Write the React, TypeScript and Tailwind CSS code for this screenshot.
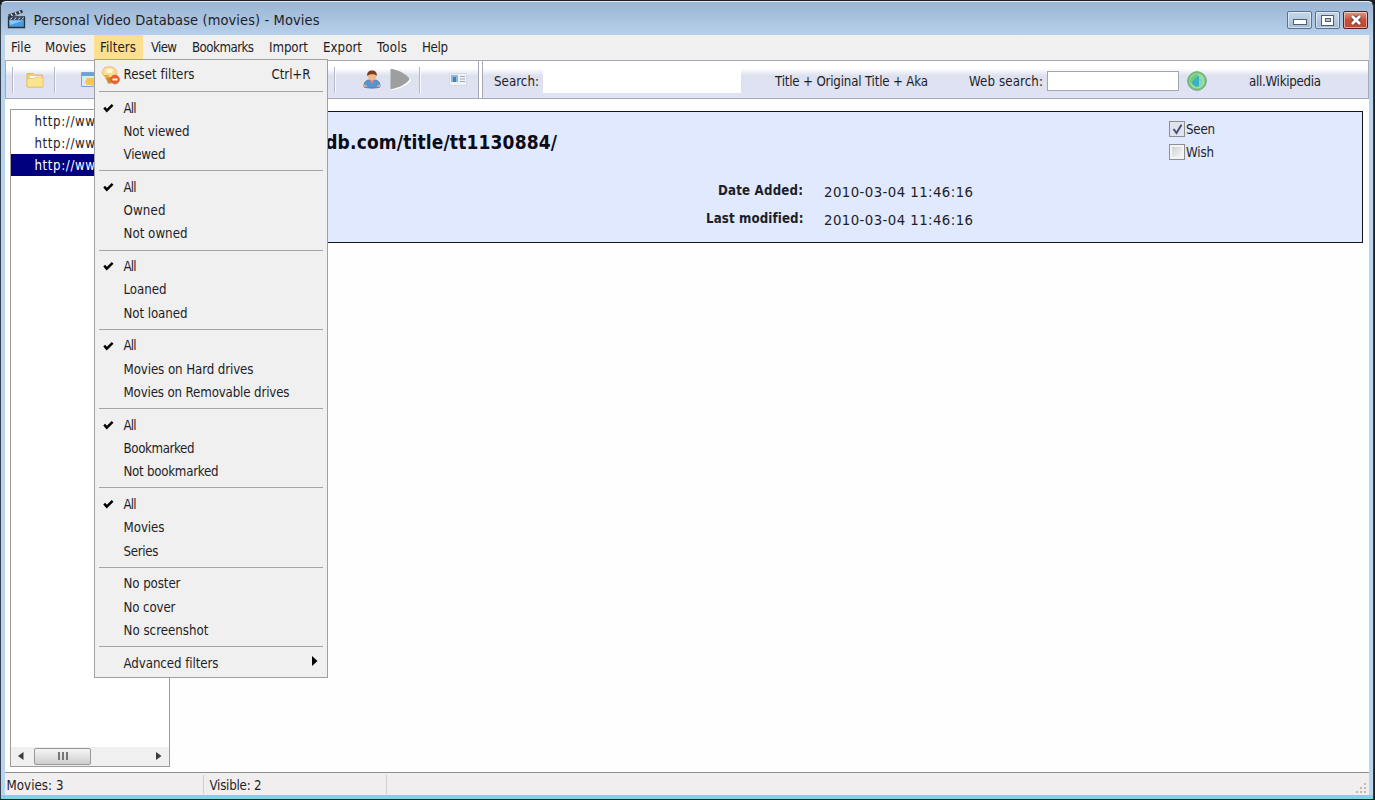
import React, { useLayoutEffect, useRef, useState } from 'react';

/* Text that spreads its letters evenly over the width of its box. */
function T({ c, children }: { c: string; children: string }) {
  const box = useRef<HTMLSpanElement>(null);
  const inner = useRef<HTMLSpanElement>(null);
  const [ls, setLs] = useState(0);
  useLayoutEffect(() => {
    if (box.current && inner.current && children.length > 1) {
      const w = box.current.getBoundingClientRect().width;
      const n = inner.current.getBoundingClientRect().width;
      setLs((w - n) / (children.length - 1));
    }
  }, [children]);
  return (
    <span ref={box} className={`block shrink-0 whitespace-nowrap ${c}`}>
      <span ref={inner} className="inline-block" style={{ letterSpacing: ls }}>{children}</span>
    </span>
  );
}

const groups: [string, string][][] = [
  [['All', 'w-[13px]'], ['Not viewed', 'w-[66px]'], ['Viewed', 'w-[42px]']],
  [['All', 'w-[13px]'], ['Owned', 'w-[42px]'], ['Not owned', 'w-[64px]']],
  [['All', 'w-[13px]'], ['Loaned', 'w-[43px]'], ['Not loaned', 'w-[64px]']],
  [['All', 'w-[13px]'], ['Movies on Hard drives', 'w-[130px]'], ['Movies on Removable drives', 'w-[166px]']],
  [['All', 'w-[13px]'], ['Bookmarked', 'w-[71px]'], ['Not bookmarked', 'w-[95px]']],
  [['All', 'w-[13px]'], ['Movies', 'w-[41px]'], ['Series', 'w-[35px]']],
  [['No poster', 'w-[57px]'], ['No cover', 'w-[52px]'], ['No screenshot', 'w-[85px]']],
];

const Sep = () => (
  <div className="flex h-[9.4px] items-center px-1"><div className="h-px w-full bg-[#a5a5a5]" /></div>
);

const Tick = () => (
  <svg className="h-[10px] w-[11px]" viewBox="0 0 11 10"><path d="M1.2 4.6 3.8 7.6 9.6 1.800" fill="none" stroke="#000" strokeWidth="2.500" /></svg>
);

function ResetIcon() {
  return (
    <svg className="h-[19px] w-[19px]" viewBox="0 0 19 19">
      <path d="M8 .8C3.500.8.8 3.500 1.300 7c.4 2.500 3 3.500 4 6.500h6c.5-3 4-3.500 4.300-7C15.800 3 12.500.8 8 .8Z" fill="#fbdc92" stroke="#e8b36a" strokeWidth=".8" />
      <path d="M5 3.500c2-1.500 5-1 7 0l-1 3.500H6Z" fill="#fff8de" />
      <path d="M4.500 11h7v2l-1 4.500H7Z" fill="#c98f2e" />
      <path d="M3 9h5l-1 3H5Z" fill="#f0a63c" />
      <circle cx="14" cy="13.500" r="4.400" fill="#e9622b" stroke="#d2602f" strokeWidth=".7" />
      <path d="M11.500 13.500h5" stroke="#fff" strokeWidth="1.900" />
    </svg>
  );
}

function Menu() {
  return (
    <div className="absolute left-[94px] top-[59px] z-10 flex h-[619px] w-[234px] flex-col border border-[#a0a0a0] bg-[#f0f0f0] pt-[3.500px] text-[#1e1e28]">
      <div className="flex h-[23.300px] items-center pl-[6px]">
        <ResetIcon />
        <T c="ml-[3.500px] w-[71px]">Reset filters</T>
        <T c="ml-[77px] w-[39px]">Ctrl+R</T>
      </div>
      {groups.map((g, i) => (
        <React.Fragment key={i}>
          <Sep />
          {g.map(([t, w]) => (
            <div key={t} className="flex h-[23.300px] items-center">
              <div className="w-[28.500px] shrink-0 pl-[8px]">{t === 'All' && <Tick />}</div>
              <div className="pt-[1.400px]"><T c={w}>{t}</T></div>
            </div>
          ))}
        </React.Fragment>
      ))}
      <Sep />
      <div className="flex h-[23.300px] items-center pl-[28.500px]">
        <div className="pt-[1.400px]"><T c="w-[95px]">Advanced filters</T></div>
        <svg className="-mt-[3px] ml-[93px] h-[10px] w-[6px]" viewBox="0 0 6 10"><path d="M0 0 5.500 5 0 10Z" fill="#000" /></svg>
      </div>
    </div>
  );
}

function Clapper() {
  return (
    <svg className="h-[20px] w-[20px]" viewBox="0 0 20 20">
      <path d="M1 5.500 15 .8l1 3L2.500 8.500Z" fill="#333b45" />
      <path d="m4 4.800 1.500 2.200M8 3.300 9.500 5.700M12 2l1.500 2.500" stroke="#dde5ee" strokeWidth="1.300" />
      <path d="M1.500 8h16v10.500h-16Z" fill="#4a9be0" stroke="#27323f" strokeWidth="1.300" />
      <path d="M2 8.500h15v2.300H2Z" fill="#38424e" />
      <path d="m5 8.500-1.500 2M9 8.500l-1.500 2M13 8.500l-1.500 2M16.500 8.500l-1.500 2" stroke="#e6edf5" />
      <path d="M2.500 11.500h14L3 16Z" fill="#8cc8f3" />
    </svg>
  );
}

function Folder() {
  return (
    <svg className="h-[16px] w-[18px]" viewBox="0 0 18 16">
      <path d="M1 1.500h6l1.500 1.500H16.500v12H1Z" fill="#f5cf66" stroke="#dfb766" />
      <path d="M4 4h11v3H4Z" fill="#fff" />
      <path d="M1 6.500h7l1.500-1.500h7.500v10H1Z" fill="#fbe48e" stroke="#e6c268" strokeWidth=".8" />
    </svg>
  );
}

const Divider = () => <div className="h-[26px] w-[2px] border-l border-[#b3b9c8] bg-white/80" />;

const capBtn = 'flex h-[18px] w-[25px] items-center justify-center rounded-[2px] border shadow-[inset_0_0_0_1px_rgba(255,255,255,0.5)]';

export default function App() {
  return (
    <div className="relative flex h-[800px] w-[1375px] flex-col overflow-hidden bg-[#1b1f24] font-['DejaVu_Sans_Condensed','DejaVu_Sans',sans-serif] text-[13.200px] leading-[18px] text-[#1e1e28]">
      <div className="mt-px flex h-[798px] w-[1374px] flex-col rounded-t-[6px] border-l border-r border-t border-l-[#35414f] border-r-[#12485a] border-t-[#e4edf6] bg-[#b9d5ee]">
        <div className="flex h-[33px] shrink-0 items-center rounded-t-[6px] bg-gradient-to-b from-[#9ab5d4] to-[#b7cfe9] pl-[6px]">
          <Clapper />
          <T c="ml-[6.500px] mt-[2px] w-[286px] text-[14.500px]">Personal Video Database (movies) - Movies</T>
          <div className="ml-auto mt-[3px] flex gap-[3px] pr-[5px]">
            <div className={`${capBtn} border-[#5c718e] bg-gradient-to-b from-[#c6d7ea] to-[#a3bbd6]`}>
              <div className="mt-[4px] h-[6px] w-[14px] border border-[#525d6e] bg-white" />
            </div>
            <div className={`${capBtn} border-[#5c718e] bg-gradient-to-b from-[#c6d7ea] to-[#a3bbd6]`}>
              <div className="flex h-[11px] w-[13px] items-center justify-center border border-[#525d6e] bg-white"><div className="h-[4px] w-[6px] border border-[#525d6e] bg-[#b4c6dc]" /></div>
            </div>
            <div className={`${capBtn} border-[#5b1f22] bg-gradient-to-b from-[#dc9a8c] via-[#c84c36] to-[#bf4a30]`}>
              <svg className="h-[12px] w-[14px]" viewBox="0 0 14 12"><path d="m3 2 8 8M11 2l-8 8" stroke="#5d3a3a" strokeWidth="4.500" /><path d="m3 2 8 8M11 2l-8 8" stroke="#fff" strokeWidth="2.800" /></svg>
            </div>
          </div>
        </div>

        <div className="mx-[4px] flex min-h-0 flex-1 flex-col bg-white">
          <div className="flex h-[25px] shrink-0 items-center bg-[#f0f0f0] pl-[6px]">
            <T c="w-[20px]">File</T>
            <T c="ml-[14px] w-[41px]">Movies</T>
            <div className="ml-[8px] flex h-full w-[49px] items-center bg-[#fddf8f] pl-[6px]"><T c="w-[36px]">Filters</T></div>
            <T c="ml-[8px] w-[26px]">View</T>
            <T c="ml-[15px] w-[62px]">Bookmarks</T>
            <T c="ml-[15px] w-[39px]">Import</T>
            <T c="ml-[15px] w-[39px]">Export</T>
            <T c="ml-[15px] w-[30px]">Tools</T>
            <T c="ml-[15px] w-[26px]">Help</T>
          </div>

          <div className="flex h-[39px] shrink-0 items-center border border-[#a6a9b5] bg-gradient-to-b from-white from-20% via-[#dde1ef] via-40% to-[#dfe3f5] pl-[6px]">
            <Divider />
            <div className="ml-[12px]"><Folder /></div>
            <div className="ml-[10px]"><Divider /></div>
            <svg className="ml-[25px] h-[18px] w-[18px]" viewBox="0 0 18 18"><path d="M.5 1.500h16v14H.5Z" fill="#d9e8fa" stroke="#7ba4d8" /><path d="M1 2h15v3H1Z" fill="#6d9fe0" /><path d="M6 7h10v7l-3 3-2-3H6l-2-3Z" fill="#f7c64b" /></svg>
            <div className="ml-[235px]"><Divider /></div>
            <svg className="ml-[27px] h-[19px] w-[18px]" viewBox="0 0 18 19">
              <path d="M1 17c-.5-4 2-7 5-7h6c3 0 5.500 3 5 7-4 1.500-12 1.500-16 0Z" fill="#5a94cf" stroke="#3f72ab" strokeWidth=".8" />
              <path d="M6.500 10h5L9 14Z" fill="#d98a80" />
              <path d="M1 14.500c2 0 3 1 3 2.500l-3-.3ZM17 14.500c-2 0-3 1-3 2.500l3-.3Z" fill="#e8b08a" />
              <circle cx="9" cy="6" r="4.300" fill="#f0b98c" />
              <path d="M4.300 6C3.500 2.500 6 .5 9 .5s5.500 2 4.700 5.500C12.500 3.500 6 3.500 4.300 6Z" fill="#7b3f1d" />
            </svg>
            <svg className="ml-[9px] h-[23px] w-[22px]" viewBox="0 0 22 23"><path d="M1.500 2C9 2 20.500 9 21 12c-.5 3-12 10-19.500 10Z" fill="#fff" /><path d="M.5 1C8 1 19 8 19.500 11c-.5 3-11.500 10-19 10Z" fill="#9d9f9e" /></svg>
            <div className="ml-[7px]"><Divider /></div>
            <svg className="ml-[28px] h-[13px] w-[18px]" viewBox="0 0 18 13"><path d="M.5.5h17v12H.5Z" fill="#edf1f8" stroke="#d3d9e4" /><path d="M2 2h7v7H2Z" fill="#8db6de" /><path d="M4 4h3v5H4Z" fill="#4d7cab" /><path d="M11 3.500h5M11 6h5M11 8.500h5" stroke="#9da9b9" /></svg>
            <div className="ml-[11px] h-full w-[5px] border-l border-r border-[#a6a9b5] bg-white" />
            <T c="ml-[11px] mt-[4px] w-[45px]">Search:</T>
            <div className="ml-[4px] mt-[3px] h-[24px] w-[198px] bg-white" />
            <T c="ml-[34px] mt-[4px] w-[153px]">Title + Original Title + Aka</T>
            <T c="ml-[41px] mt-[4px] w-[74px]">Web search:</T>
            <div className="ml-[4px] mt-[3px] h-[20px] w-[132px] border border-[#a3a6ad] bg-white" />
            <svg className="ml-[8px] mt-[3px] h-[20px] w-[20px]" viewBox="0 0 20 20">
              <circle cx="10" cy="10" r="9.300" fill="#79c779" stroke="#5fa77a" />
              <circle cx="10" cy="10" r="7.500" fill="#a3dc9e" />
              <path d="M3 10c0-3 3-6 7-7l2 2-4 4-4 4Z" fill="#6cca86" />
              <path d="m5 11 6-6 2 1v9l-4 1-4-3Z" fill="#39b2bd" /><path d="m12 5 4 4-2 6-2 1Z" fill="#7fd6cf" />
            </svg>
            <T c="ml-[42px] mt-[4px] w-[72px]">all.Wikipedia</T>
          </div>

          <div className="flex min-h-0 flex-1 bg-[#fefefe] pl-[5px] pr-[6px]">
            <div className="mt-[10px] flex h-[658px] w-[160px] flex-col overflow-hidden border border-[#9b9b9b] bg-white">
              <div className="flex h-[22px] items-center pl-[23.500px] pt-px"><T c="w-[74px]">http://www.</T></div>
              <div className="flex h-[22px] items-center pl-[23.500px] pt-px"><T c="w-[74px]">http://www.</T></div>
              <div className="flex h-[22px] items-center bg-[#00007f] pl-[23.500px] pt-px text-white"><T c="w-[74px]">http://www.</T></div>
              <div className="mt-auto flex h-[19px] items-center bg-[#f0f0f0] pb-px pl-[7px] pr-[7px]">
                <svg className="h-[8px] w-[6px]" viewBox="0 0 6 8"><path d="M5.500 0v8L0 4Z" fill="#3c3c3c" /></svg>
                <div className="ml-[10px] flex h-[17px] w-[57px] items-center justify-center gap-[2px] rounded-[2px] border border-[#979797] bg-gradient-to-b from-[#f4f4f4] to-[#cfcfcf]">
                  <div className="h-[8px] w-[2px] bg-[#777]" /><div className="h-[8px] w-[2px] bg-[#777]" /><div className="h-[8px] w-[2px] bg-[#777]" />
                </div>
                <svg className="ml-auto h-[8px] w-[6px]" viewBox="0 0 6 8"><path d="M0 0v8l5.500-4Z" fill="#3c3c3c" /></svg>
              </div>
            </div>
            <div className="ml-[4px] mt-[12px] flex h-[132px] flex-1 border border-[#15151c] bg-[#e0e9fd]">
              <div className="flex w-[628px] shrink-0 flex-col">
                <div className="mt-[18px] flex pl-[12px]"><T c="w-[370px] text-[19px] font-bold leading-[24px] text-[#0c0c18]">http://www.imdb.com/title/tt1130884/</T></div>
                <div className="mt-[28px] flex justify-end"><T c="w-[85px] font-bold">Date Added:</T></div>
                <div className="mt-[10px] flex justify-end"><T c="w-[97px] font-bold">Last modified:</T></div>
              </div>
              <div className="ml-[21px] mt-[70.500px] flex flex-col gap-[10px] text-[14.800px]">
                <T c="w-[149px]">2010-03-04 11:46:16</T>
                <T c="w-[149px]">2010-03-04 11:46:16</T>
              </div>
              <div className="ml-[196px] mt-[9px] flex flex-col gap-[7px]">
                <div className="flex h-[16px] items-center gap-[1px]">
                  <div className="flex h-[16px] w-[16px] items-center justify-center border border-[#8e8f8f] bg-[#dfe3ec]"><svg className="h-[11px] w-[11px]" viewBox="0 0 11 11"><path d="m1.500 5 3 4L9.500.8" fill="none" stroke="#4b4f78" strokeWidth="2" /></svg></div>
                  <T c="mt-[2px] w-[29px]">Seen</T>
                </div>
                <div className="flex h-[16px] items-center gap-[1px]">
                  <div className="h-[16px] w-[16px] border border-[#8e8f8f] bg-[#f4f4f4] p-[2px]"><div className="h-full w-full bg-gradient-to-br from-[#cfd2d6] to-[#f6f6f6]" /></div>
                  <T c="mt-[2px] w-[28px]">Wish</T>
                </div>
              </div>
            </div>
          </div>

          <div className="flex h-[23px] shrink-0 items-center border-t border-[#8f8f8f] bg-[#f0eeee] pl-[1.500px]">
            <T c="mt-[3px] w-[57px]">Movies: 3</T>
            <div className="ml-[139.500px] h-[19px] w-px bg-[#d0d0d0]" />
            <T c="ml-[5.500px] mt-[3px] w-[52px]">Visible: 2</T>
            <div className="ml-[124.500px] h-[19px] w-px bg-[#d0d0d0]" />
            <svg className="ml-auto mr-[2px] mt-[8px] h-[11px] w-[11px]" viewBox="0 0 11 11"><path d="M8 0h2v2H8zM8 4h2v2H8zM8 8h2v2H8zM4 4h2v2H4zM4 8h2v2H4zM0 8h2v2H0z" fill="#bdb9b9" /></svg>
          </div>
        </div>
        <div className="h-[4px] shrink-0 bg-[#86cfe6]" />
      </div>
      <Menu />
    </div>
  );
}
